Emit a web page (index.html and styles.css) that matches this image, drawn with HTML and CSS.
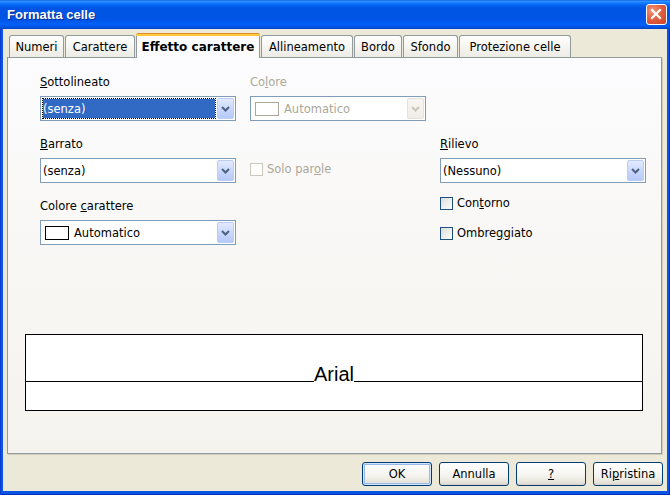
FILE: index.html
```html
<!DOCTYPE html>
<html lang="it">
<head>
<meta charset="utf-8">
<title>Formatta celle</title>
<link rel="stylesheet" href="styles.css">
</head>
<body>
<div class="window">
  <div class="titlebar">
    <span class="title">Formatta celle</span>
    <div class="close" aria-label="Chiudi">
      <svg width="21" height="21" viewBox="0 0 21 21"><path d="M6 6 L14 14 M14 6 L6 14" stroke="#fff" stroke-width="2.2" stroke-linecap="square"/></svg>
    </div>
  </div>
  <div class="client">
    <div class="tabs">
      <div class="tab t-numeri">Numeri</div>
      <div class="tab t-carattere">Carattere</div>
      <div class="tab active t-effetto">Effetto carattere</div>
      <div class="tab t-allinea">Allineamento</div>
      <div class="tab t-bordo">Bordo</div>
      <div class="tab t-sfondo">Sfondo</div>
      <div class="tab t-prot">Protezione celle</div>
    </div>
    <div class="panel">
      <div class="options">
        <div class="col">
          <div class="field">
            <div class="label"><u>S</u>ottolineato</div>
            <div class="combo">
              <div class="value selected">(senza)</div>
              <div class="drop"><svg width="9" height="6" viewBox="0 0 9 6"><path d="M1 1 L4.5 4.5 L8 1" fill="none" stroke="#4D6185" stroke-width="2"/></svg></div>
            </div>
          </div>
          <div class="field">
            <div class="label"><u>B</u>arrato</div>
            <div class="combo">
              <div class="value">(senza)</div>
              <div class="drop"><svg width="9" height="6" viewBox="0 0 9 6"><path d="M1 1 L4.5 4.5 L8 1" fill="none" stroke="#4D6185" stroke-width="2"/></svg></div>
            </div>
          </div>
          <div class="field">
            <div class="label">Colore <u>c</u>arattere</div>
            <div class="combo">
              <div class="value"><span class="swatch"></span>Automatico</div>
              <div class="drop"><svg width="9" height="6" viewBox="0 0 9 6"><path d="M1 1 L4.5 4.5 L8 1" fill="none" stroke="#4D6185" stroke-width="2"/></svg></div>
            </div>
          </div>
        </div>
        <div class="col">
          <div class="field disabled">
            <div class="label">Co<u>l</u>ore</div>
            <div class="combo">
              <div class="value"><span class="swatch"></span>Automatico</div>
              <div class="drop"><svg width="9" height="6" viewBox="0 0 9 6"><path d="M1 1 L4.5 4.5 L8 1" fill="none" stroke="#C9C7BA" stroke-width="2"/></svg></div>
            </div>
          </div>
          <div class="check solo disabled"><span class="box"></span><span>Solo par<u>o</u>le</span></div>
        </div>
        <div class="col">
          <div class="field rilievo">
            <div class="label"><u>R</u>ilievo</div>
            <div class="combo">
              <div class="value">(Nessuno)</div>
              <div class="drop"><svg width="9" height="6" viewBox="0 0 9 6"><path d="M1 1 L4.5 4.5 L8 1" fill="none" stroke="#4D6185" stroke-width="2"/></svg></div>
            </div>
          </div>
          <div class="check"><span class="box"></span><span>Con<u>t</u>orno</span></div>
          <div class="check"><span class="box"></span><span>Ombre<u>g</u>giato</span></div>
        </div>
      </div>
      <div class="preview">
        <div class="pline">
          <div class="rule"></div>
          <div class="sample">Arial</div>
          <div class="rule"></div>
        </div>
      </div>
    </div>
    <div class="buttons">
      <div class="btn default">OK</div>
      <div class="btn">Annulla</div>
      <div class="btn"><u>?</u></div>
      <div class="btn">Ri<u>p</u>ristina</div>
    </div>
  </div>
</div>
</body>
</html>
```
FILE: styles.css
```css
html, body {
  margin: 0;
  padding: 0;
}
body {
  width: 670px;
  height: 495px;
  overflow: hidden;
  font-family: "DejaVu Sans", "Liberation Sans", sans-serif;
  font-size: 11.5px;
  color: #000;
}
.window {
  width: 670px;
  height: 495px;
  box-sizing: border-box;
  display: flex;
  flex-direction: column;
  background: #0A54E6;
  box-shadow: inset 1px 0 0 #0B3ED0, inset -1px 0 0 #0030B8, inset 0 -1px 0 #0030B8;
}
.titlebar {
  height: 29px;
  flex: none;
  display: flex;
  align-items: center;
  justify-content: space-between;
  padding: 0 3px 0 7px;
  background: linear-gradient(to bottom,
    #0058EE 0px, #3A93FF 1px, #2088FF 2px, #0A70FC 4px, #0260EC 6px,
    #0055E4 8px, #0054E3 16px, #0057EA 21px, #0061F6 24px, #005AEE 26px,
    #004CD6 28px, #0044C0 29px);
}
.title {
  font-family: "Liberation Sans", Arial, sans-serif;
  font-weight: bold;
  font-size: 13px;
  color: #fff;
  text-shadow: 1px 1px 0 #0A2A8C;
}
.close {
  width: 21px;
  height: 21px;
  box-sizing: border-box;
  border: 1px solid #fff;
  border-radius: 3px;
  background: radial-gradient(circle at 30% 30%, #F09A80 0%, #E2603F 45%, #C8432A 100%);
  display: flex;
  align-items: center;
  justify-content: center;
}
.close svg {
  display: block;
  margin: -1px;
}
.client {
  flex: 1;
  margin: 0 3px 4px 3px;
  background: #ECE9D8;
  display: flex;
  flex-direction: column;
}
.tabs {
  position: relative;
  z-index: 1;
  height: 28px;
  flex: none;
  display: flex;
  align-items: flex-end;
  gap: 1px;
  padding-left: 6px;
}
.tab {
  position: relative;
  height: 22px;
  box-sizing: border-box;
  border: 1px solid #919B9C;
  border-bottom: none;
  border-radius: 3px 3px 0 0;
  background: linear-gradient(to bottom, #FFFFFF, #F6F5F1 50%, #ECEBE5);
  display: flex;
  align-items: center;
  justify-content: center;
  white-space: nowrap;
}
.tab.active {
  height: 25px;
  margin-bottom: -1px;
  background: #FCFCFE;
  font-weight: bold;
  font-size: 12px;
  padding-top: 1px;
}
.tab.active::before {
  content: "";
  position: absolute;
  top: -1px;
  left: -1px;
  right: -1px;
  height: 3px;
  border-radius: 3px 3px 0 0;
  background: linear-gradient(to bottom, #E68B2C 0 1px, #FFC73C 1px);
}
.t-numeri { width: 55px; }
.t-carattere { width: 70px; }
.t-effetto { width: 124px; }
.t-allinea { width: 92px; }
.t-bordo { width: 48px; }
.t-sfondo { width: 55px; }
.t-prot { width: 112px; }
.panel {
  flex: none;
  height: 397px;
  box-sizing: border-box;
  margin: 0 5px 0 4px;
  border: 1px solid #919B9C;
  background: linear-gradient(to bottom, #FCFCFE, #F9F8F6 40%, #F4F3EE);
  box-shadow: 1px 1px 0 #D0CDBE;
  display: flex;
  flex-direction: column;
}
.options {
  display: grid;
  grid-template-columns: 196px 176px 206px;
  column-gap: 14px;
  padding: 14px 0 0 32px;
  align-items: start;
}
.col {
  display: flex;
  flex-direction: column;
}
.field {
  display: flex;
  flex-direction: column;
}
.field + .field {
  margin-top: 13px;
}
.field.rilievo {
  margin-top: 62px;
}
.label {
  height: 20px;
  line-height: 20px;
  white-space: nowrap;
}
.combo {
  margin-top: 4px;
  height: 25px;
  box-sizing: border-box;
  border: 1px solid #7F9DB9;
  background: #fff;
  padding: 1px;
  display: flex;
}
.value {
  flex: 1;
  margin-right: 1px;
  border: 1px dotted transparent;
  display: flex;
  align-items: center;
  white-space: nowrap;
}
.value.selected {
  background: #316AC5;
  background-clip: padding-box;
  border-color: #000;
  color: #fff;
}
.swatch {
  width: 24px;
  height: 14px;
  box-sizing: border-box;
  border: 1px solid #000;
  margin: 0 5px 0 2px;
}
.drop {
  width: 17px;
  box-sizing: border-box;
  border: 1px solid #BCCCF3;
  border-radius: 2px;
  background: linear-gradient(to bottom, #E2EAFE, #C6D5FC 60%, #B6C9F8);
  display: flex;
  align-items: center;
  justify-content: center;
}
.disabled {
  color: #ACA899;
}
.disabled .swatch {
  border-color: #ACA899;
}
.disabled .drop {
  border-color: #E4E2D8;
  background: linear-gradient(to bottom, #F7F6F3, #EEEDE6);
}
.check {
  height: 20px;
  margin-top: 10px;
  display: flex;
  align-items: center;
  gap: 4px;
  white-space: nowrap;
}
.check.solo {
  margin-top: 37px;
  height: 22px;
}
.box {
  width: 13px;
  height: 13px;
  box-sizing: border-box;
  border: 1px solid #1C5180;
  background: linear-gradient(135deg, #DCDCD7, #FFFFFF);
  flex: none;
}
.check.disabled .box {
  border-color: #CAC8BB;
  background: #FFFFFF;
}
.preview {
  margin: auto 18px 42px 17px;
  height: 77px;
  box-sizing: border-box;
  border: 1px solid #000;
  background: #fff;
}
.pline {
  height: 47px;
  display: flex;
  align-items: flex-end;
}
.rule {
  flex: 1;
  height: 1px;
  background: #000;
}
.sample {
  font-family: "Liberation Sans", Arial, sans-serif;
  font-size: 20px;
  line-height: 20px;
  margin-bottom: -2px;
}
.buttons {
  display: flex;
  justify-content: flex-end;
  gap: 7px;
  margin-top: 8px;
  padding-right: 4px;
}
.btn {
  width: 70px;
  height: 24px;
  box-sizing: border-box;
  border: 1px solid #003C74;
  border-radius: 3px;
  background: linear-gradient(to bottom, #FFFFFF, #F4F3EE 60%, #E5E2D8 90%, #D6D0C5);
  display: flex;
  align-items: center;
  justify-content: center;
}
.btn.default {
  box-shadow: inset 0 0 0 1px #CEE7FF, inset 0 0 0 2px #98B8EA;
}
```
